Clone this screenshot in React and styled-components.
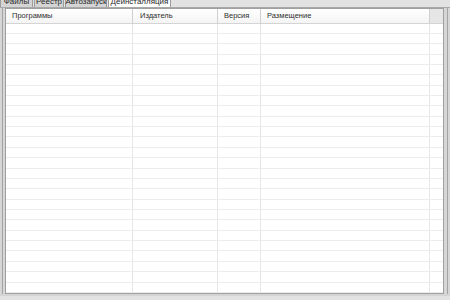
import React from 'react';
import styled, { createGlobalStyle } from 'styled-components';

const GlobalStyle = createGlobalStyle`
  html, body { margin: 0; padding: 0; background: #d8d8d8; }
  body { font-family: "Liberation Sans", "DejaVu Sans", sans-serif; }
`;

const Window = styled.div`
  width: 450px;
  height: 300px;
  display: flex;
  flex-direction: column;
  overflow: hidden;
  background: #d8d8d8;
`;

const TabBar = styled.div`
  height: 8px;
  display: flex;
  align-items: flex-end;
  overflow: hidden;
  padding-left: 0;
  background: #e2e2e2;
  border-bottom: 1px solid #a8a8a8;
  box-sizing: border-box;
`;

const Tab = styled.div`
  height: ${p => (p.active ? '13px' : '12px')};
  margin-bottom: ${p => (p.active ? '-1px' : '0')};
  width: ${p => p.w}px;
  display: flex;
  align-items: flex-end;
  justify-content: center;
  font-size: 8px;
  line-height: 9px;
  color: #2a2a2a;
  background: ${p => (p.active ? '#ffffff' : '#d4d4d4')};
  border: 1px solid #9c9c9c;
  border-bottom: none;
  box-sizing: border-box;
  padding-bottom: ${p => (p.active ? '2px' : '1px')};
  margin-right: 1px;
  white-space: nowrap;
`;

const Body = styled.div`
  flex: 1;
  display: flex;
  min-height: 0;
`;

const Frame = styled.div`
  width: ${p => p.w}px;
  background: linear-gradient(to right, #d6d6d6 0, #d6d6d6 ${p => p.line}px, #a4a4a4 ${p => p.line}px, #a4a4a4 ${p => p.line + 1}px, #d6d6d6 ${p => p.line + 1}px);
`;

const Panel = styled.div`
  flex: 1;
  background: #ffffff;
  border: 1px solid #a0a0a0;
  display: flex;
  flex-direction: column;
  overflow: hidden;
`;

const cols = '127px 85px 43px 169px 1fr';

const Header = styled.div`
  height: 14px;
  display: grid;
  grid-template-columns: ${cols};
  border-bottom: 1px solid #d4d4d4;
  background: linear-gradient(#ffffff, #f4f4f4);
`;

const HeadCell = styled.div`
  font-size: 7.5px;
  color: #2e2e2e;
  line-height: 13px;
  padding-left: ${p => p.pad}px;
  border-right: 1px solid #d0d0d0;
  white-space: nowrap;
  overflow: hidden;
  background: ${p => (p.filler ? '#e6e6e6' : 'transparent')};
  &:last-child { border-right: none; }
`;

const Row = styled.div`
  height: 10.7px;
  display: grid;
  grid-template-columns: ${cols};
  border-bottom: 1px solid #ececec;
  box-sizing: border-box;
`;

const Cell = styled.div`
  border-right: 1px solid #e6e6e6;
  &:last-child { border-right: none; }
`;

const Bottom = styled.div`
  height: 6px;
  background: linear-gradient(#d4d4d4 0, #d4d4d4 2px, #e2e2e2 2px);
`;

const tabs = [
  { label: 'Файлы', w: 33 },
  { label: 'Реестр', w: 30 },
  { label: 'Автозапуск', w: 42 },
  { label: 'Деинсталляция', w: 63 },
];
const headers = [
  { label: 'Программы', pad: 6 },
  { label: 'Издатель', pad: 7 },
  { label: 'Версия', pad: 6 },
  { label: 'Размещение', pad: 6 },
];

export default function App() {
  const rows = Array.from({ length: 26 }, (_, i) => i);
  return (
    <Window>
      <GlobalStyle />
      <TabBar>
        {tabs.map((t, i) => (
          <Tab key={t.label} w={t.w} active={i === 3}>{t.label}</Tab>
        ))}
      </TabBar>
      <Body>
        <Frame w={5} line={2} />
        <Panel>
          <Header>
            {headers.map(h => (
              <HeadCell key={h.label} pad={h.pad}>{h.label}</HeadCell>
            ))}
            <HeadCell filler />
          </Header>
          {rows.map(r => (
            <Row key={r}>
              <Cell /><Cell /><Cell /><Cell /><Cell />
            </Row>
          ))}
        </Panel>
        <Frame w={6} line={3} />
      </Body>
      <Bottom />
    </Window>
  );
}
